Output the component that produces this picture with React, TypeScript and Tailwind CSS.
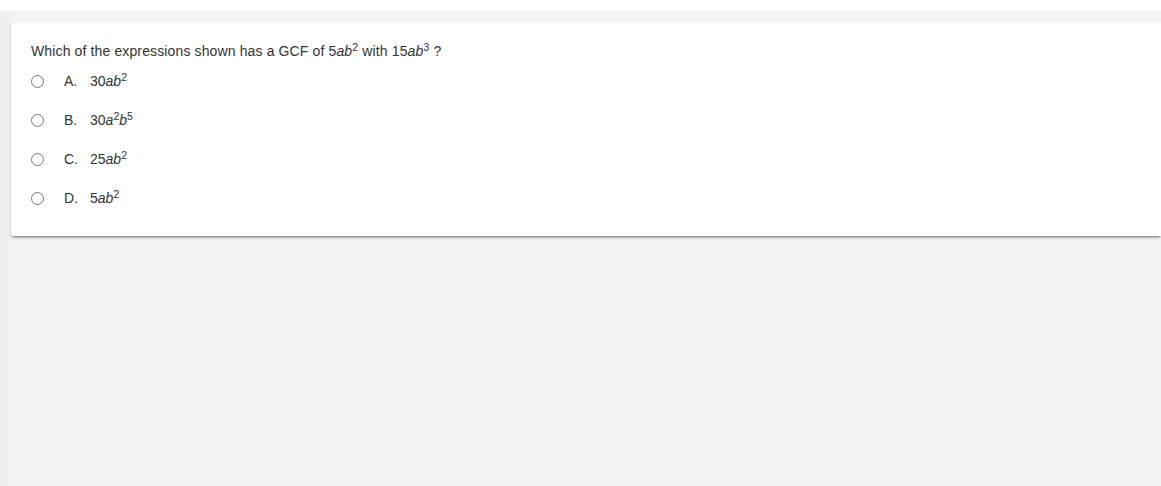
const options = [
  { key: 'A.', body: <>30<i>ab</i><sup>2</sup></> },
  { key: 'B.', body: <>30<i>a</i><sup>2</sup><i>b</i><sup>5</sup></> },
  { key: 'C.', body: <>25<i>ab</i><sup>2</sup></> },
  { key: 'D.', body: <>5<i>ab</i><sup>2</sup></> },
];

export default function App() {
  return (
    <div
      className="w-full h-[486px] bg-white flex flex-col overflow-hidden text-[#333]"
      style={{ fontFamily: '"Liberation Sans", Arial, sans-serif' }}
    >
      <div className="h-[11px] shrink-0" />
      <div className="flex flex-1">
        <div className="w-[11px] shrink-0 bg-[#f0f0f0]" />
        <div className="flex-1 bg-[#f3f3f3] pt-[12px]">
          {/* Question card */}
          <div className="bg-white rounded-bl-[3px] pl-[20px] pt-[20px] pb-[18px] shadow-[0_2px_3px_-1px_rgba(0,0,0,0.6)]">
            <p className="text-[14px] leading-[16px] tracking-[0.13px]">
              Which of the expressions shown has a GCF of 5<i>ab</i>
              <sup>2</sup> with 15<i>ab</i>
              <sup>3</sup> ?
            </p>
            <div className="mt-[3px] flex flex-col">
              {options.map((o) => (
                <label key={o.key} className="h-[39px] flex items-center text-[14px]">
                  <span className="w-[13px] h-[13px] rounded-full border border-[#767676] bg-white shrink-0" />
                  <span className="ml-[20px] w-[26px]">{o.key}</span>
                  <span>{o.body}</span>
                </label>
              ))}
            </div>
          </div>
        </div>
      </div>
    </div>
  );
}
